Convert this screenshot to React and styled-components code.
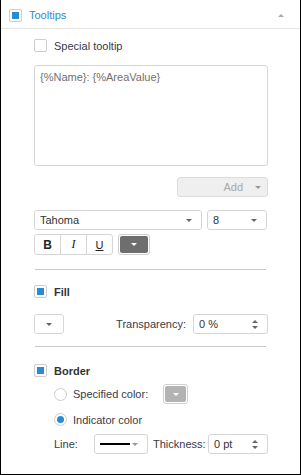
import React from "react";
import styled, { createGlobalStyle } from "styled-components";

const GlobalStyle = createGlobalStyle`
  html, body {
    margin: 0;
    padding: 0;
    background: #fff;
  }
  body {
    font-family: "Liberation Sans", Arial, sans-serif;
    font-size: 11px;
    color: #333;
  }
`;

const Panel = styled.div`
  width: 301px;
  height: 475px;
  box-sizing: border-box;
  border: 1px solid #000;
  border-top: none;
  background: #fff;
  display: flex;
  flex-direction: column;
`;

const Header = styled.div`
  height: 29px;
  box-sizing: border-box;
  display: flex;
  align-items: center;
  padding: 2px 16px 0 8px;
  border-bottom: 1px solid #e2e2e2;
`;

const HeaderTitle = styled.span`
  margin-left: 7px;
  color: #2a8ad4;
  font-size: 11px;
`;

const Caret = styled.span`
  width: 0;
  height: 0;
  border-left: ${(p) => p.$size || 3}px solid transparent;
  border-right: ${(p) => p.$size || 3}px solid transparent;
  ${(p) => (p.$up ? "border-bottom" : "border-top")}: 3px solid
    ${(p) => p.$color || "#666"};
  margin-left: ${(p) => (p.$push ? "auto" : "0")};
  flex-shrink: 0;
`;

const Body = styled.div`
  display: flex;
  flex-direction: column;
  padding: 0 32px 0 33px;
`;

const Row = styled.div`
  display: flex;
  align-items: center;
  margin-top: ${(p) => p.$top || 0}px;
  padding-left: ${(p) => p.$indent || 0}px;
  height: ${(p) => p.$h || 13}px;
`;

const Check = styled.span`
  width: 13px;
  height: 13px;
  box-sizing: border-box;
  border: 1px solid #cdcdcd;
  border-radius: 2px;
  display: flex;
  align-items: center;
  justify-content: center;
  flex-shrink: 0;
  &::after {
    content: "";
    width: 7px;
    height: 7px;
    background: ${(p) => (p.$checked ? "#2a8ad4" : "transparent")};
  }
`;

const Radio = styled.span`
  width: 13px;
  height: 13px;
  box-sizing: border-box;
  border: 1px solid #cdcdcd;
  border-radius: 50%;
  display: flex;
  align-items: center;
  justify-content: center;
  flex-shrink: 0;
  &::after {
    content: "";
    width: 7px;
    height: 7px;
    border-radius: 50%;
    background: ${(p) => (p.$checked ? "#2a8ad4" : "transparent")};
  }
`;

const Label = styled.span`
  margin-left: ${(p) => (p.$auto ? "auto" : `${p.$gap || 0}px`)};
  width: ${(p) => (p.$w ? `${p.$w}px` : "auto")};
  flex-shrink: 0;
  font-weight: ${(p) => (p.$bold ? "bold" : "normal")};
  color: ${(p) => (p.$bold ? "#333" : "#3a3a48")};
  white-space: nowrap;
`;

const TextBox = styled.div`
  margin-top: 13px;
  height: 101px;
  box-sizing: border-box;
  border: 1px solid #d6d6d6;
  border-radius: 3px;
  padding: 4px 5px;
  color: #707070;
  line-height: 14px;
`;

const AddButton = styled.div`
  align-self: flex-end;
  margin-top: 11px;
  width: 91px;
  height: 20px;
  box-sizing: border-box;
  background: #efefef;
  border: 1px solid #dcdcdc;
  border-radius: 3px;
  display: flex;
  align-items: center;
  justify-content: flex-end;
  gap: 12px;
  padding-right: 6px;
  color: #a8a8a8;
`;

const Field = styled.div`
  width: ${(p) => p.$w}px;
  height: 20px;
  box-sizing: border-box;
  border: 1px solid #d6d6d6;
  border-radius: 3px;
  display: flex;
  align-items: center;
  justify-content: ${(p) => (p.$center ? "center" : "flex-start")};
  padding: ${(p) => (p.$center ? "0" : "0 9px 0 5px")};
  margin-left: ${(p) => (p.$auto ? "auto" : `${p.$ml || 0}px`)};
  flex-shrink: 0;
  color: #333;
`;

const Spin = styled.span`
  margin-left: auto;
  display: flex;
  flex-direction: column;
  gap: 3px;
`;

const StyleGroup = styled.div`
  display: flex;
  height: 21px;
  box-sizing: border-box;
  border: 1px solid #d6d6d6;
  border-radius: 3px;
`;

const StyleButton = styled.span`
  width: 25px;
  display: flex;
  align-items: center;
  justify-content: center;
  border-left: ${(p) => (p.$first ? "none" : "1px solid #d6d6d6")};
  color: #222;
  font-weight: ${(p) => (p.$kind === "b" ? "bold" : "normal")};
  font-style: ${(p) => (p.$kind === "i" ? "italic" : "normal")};
  font-family: ${(p) =>
    p.$kind === "i" ? '"Liberation Serif", serif' : '"Liberation Sans", Arial, sans-serif'};
  text-decoration: ${(p) => (p.$kind === "u" ? "underline" : "none")};
  font-size: ${(p) => (p.$kind === "u" ? "11px" : "12px")};
`;

const ColorButton = styled.div`
  width: ${(p) => p.$w}px;
  height: ${(p) => p.$h || 21}px;
  box-sizing: border-box;
  margin-left: ${(p) => p.$ml || 0}px;
  border: 1px solid #d0d0d0;
  border-radius: 3px;
  padding: 1px;
  flex-shrink: 0;
  display: flex;
`;

const Swatch = styled.span`
  flex: 1;
  border-radius: 2px;
  background: ${(p) => p.$color};
  display: flex;
  align-items: center;
  justify-content: center;
`;

const Separator = styled.div`
  margin: ${(p) => p.$top}px 2px 0 1px;
  height: 1px;
  background: #c9c9c9;
`;

const LineSample = styled.span`
  width: 30px;
  height: 2px;
  background: #000;
`;

export default function App() {
  return (
    <>
      <GlobalStyle />
      <Panel>
        <Header>
          <Check $checked />
          <HeaderTitle>Tooltips</HeaderTitle>
          <Caret $up $push $color="#aaa" />
        </Header>
        <Body>
          <Row $top={10}>
            <Check />
            <Label $gap={7}>Special tooltip</Label>
          </Row>
          <TextBox>{"{%Name}: {%AreaValue}"}</TextBox>
          <AddButton>
            <span>Add</span>
            <Caret $color="#999" />
          </AddButton>
          <Row $top={13} $h={20}>
            <Field $w={168}>
              Tahoma
              <Caret $push />
            </Field>
            <Field $w={60} $ml={5}>
              8
              <Caret $push />
            </Field>
          </Row>
          <Row $top={4} $h={21}>
            <StyleGroup>
              <StyleButton $first $kind="b">B</StyleButton>
              <StyleButton $kind="i">I</StyleButton>
              <StyleButton $kind="u">U</StyleButton>
            </StyleGroup>
            <ColorButton $w={32} $ml={5}>
              <Swatch $color="#6e6e6e">
                <Caret $color="#fff" />
              </Swatch>
            </ColorButton>
          </Row>
          <Separator $top={14} />
          <Row $top={15}>
            <Check $checked />
            <Label $gap={7} $bold>
              Fill
            </Label>
          </Row>
          <Row $top={16} $h={20}>
            <Field $w={30} $center>
              <Caret />
            </Field>
            <Label $auto>Transparency:</Label>
            <Field $w={75} $ml={7}>
              0 %
              <Spin>
                <Caret $up />
                <Caret />
              </Spin>
            </Field>
          </Row>
          <Separator $top={12} />
          <Row $top={17}>
            <Check $checked />
            <Label $gap={7} $bold>
              Border
            </Label>
          </Row>
          <Row $top={7} $h={20} $indent={20}>
            <Radio />
            <Label $gap={6}>Specified color:</Label>
            <ColorButton $w={25} $h={20} $ml={15}>
              <Swatch $color="#b3b3b3">
                <Caret $color="#fff" />
              </Swatch>
            </ColorButton>
          </Row>
          <Row $top={9} $indent={20}>
            <Radio $checked />
            <Label $gap={6}>Indicator color</Label>
          </Row>
          <Row $top={8} $h={20} $indent={20}>
            <Label $w={40}>Line:</Label>
            <Field $w={54}>
              <LineSample />
              <Caret $push $color="#999" />
            </Field>
            <Label $gap={5}>Thickness:</Label>
            <Field $w={60} $auto>
              0 pt
              <Spin>
                <Caret $up />
                <Caret />
              </Spin>
            </Field>
          </Row>
        </Body>
      </Panel>
    </>
  );
}
